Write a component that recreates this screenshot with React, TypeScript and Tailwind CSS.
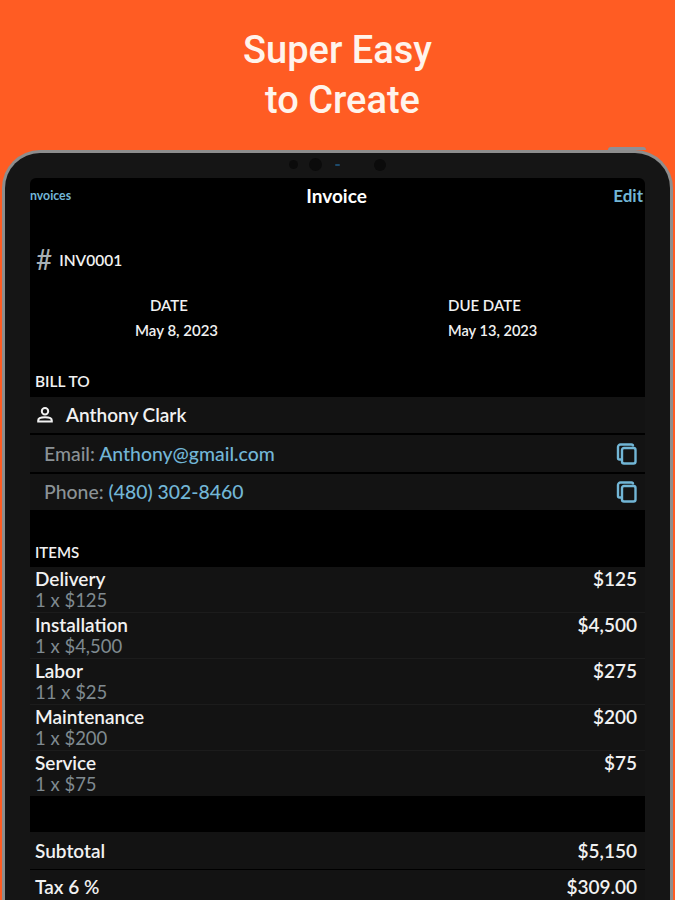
import React from "react";

const font = { fontFamily: '"Lato", "Noto Sans", sans-serif' };

function CopyIcon() {
  return (
    <svg width="22" height="22" viewBox="0 0 22 22" fill="none" stroke="#72b6d6" strokeWidth="2.4" className="-mr-[1px] shrink-0">
      <path d="M17 3.4 V3 a1.5 1.5 0 0 0 -1.5 -1.5 H4.5 A2.5 2.5 0 0 0 2 4 V15 a1.5 1.5 0 0 0 1.5 1.5 H5" />
      <rect x="6" y="5" width="13.5" height="15.5" rx="2" />
    </svg>
  );
}

function PersonIcon() {
  return (
    <svg width="18" height="18" viewBox="0 0 18 18" fill="none" stroke="#f1f1f1" strokeWidth="2" className="shrink-0">
      <circle cx="9" cy="5.2" r="3.2" />
      <path d="M2.2 15.6 v-1.2 c0 -2 3.2 -3.2 6.8 -3.2 s6.8 1.2 6.8 3.2 v1.2 z" />
    </svg>
  );
}

const items = [
  ["Delivery", "1 x $125", "$125"],
  ["Installation", "1 x $4,500", "$4,500"],
  ["Labor", "11 x $25", "$275"],
  ["Maintenance", "1 x $200", "$200"],
  ["Service", "1 x $75", "$75"],
];

export default function App() {
  return (
    <div className="h-[900px] w-[675px] overflow-hidden bg-[#ff5c23]" style={font}>
      <h1 className="pt-[25px] text-center text-[38px] leading-[50px] font-medium text-[#fff4ec]" style={{ fontFamily: 'Roboto, sans-serif' }}>
        <div>Super Easy</div>
        <div className="pl-[10px]">to Create</div>
      </h1>
      <div className="relative mx-[2px] mt-[25px] h-[760px] rounded-t-[38px] border-x-[3px] border-t-[3px] border-[#8d8d8d] bg-[#151515] px-[25px] pt-[25px]">
        <div className="absolute -top-[6px] right-[24px] h-[3px] w-[38px] rounded-t bg-[#8f8f96]" />
        <div className="absolute top-[5px] left-[284px] flex items-center">
          <div className="h-[9px] w-[9px] rounded-full bg-[#0b0b0b]" />
          <div className="ml-[11px] h-[13px] w-[13px] rounded-full bg-[#0b0b0b]" />
          <div className="ml-[13px] h-[2px] w-[5px] rounded-full bg-[#1d4a6b]" />
          <div className="ml-[34px] h-[12px] w-[12px] rounded-full bg-[#0b0b0b]" />
        </div>
        <div className="h-[740px] rounded-t-[6px] bg-black text-[#f1f1f1]">
          <div className="flex h-[36px] items-center justify-between">
            <span className="w-[80px] text-[12.3px] font-bold whitespace-nowrap text-[#72b6d6]">nvoices</span>
            <span className="pr-[2px] text-[19px] font-bold text-white">Invoice</span>
            <span className="w-[80px] pr-[2px] text-right text-[17px] font-bold text-[#72b6d6]">Edit</span>
          </div>
          <div className="flex h-[62px] items-end gap-[8px] pl-[6px]">
            <span className="text-[28px] leading-[34px] text-[#a9b0b5]">#</span>
            <span className="-ml-[1px] pb-[6px] text-[15.5px] leading-[20px] font-semibold">INV0001</span>
          </div>
          <div className="mt-[17px] flex h-[50px]">
            <div className="ml-[105px] w-[313px] text-[15px] leading-[25px] font-semibold">
              <div className="pl-[15px]">DATE</div>
              <div>May 8, 2023</div>
            </div>
            <div className="text-[15px] leading-[25px] font-semibold">
              <div>DUE DATE</div>
              <div className="text-[14.6px]">May 13, 2023</div>
            </div>
          </div>
          <div className="mt-[24px] h-[30px] pl-[5px] text-[15.5px] leading-[29px] font-semibold">BILL TO</div>
          <div className="flex flex-col gap-[2px]">
            <div className="flex h-[36px] items-center gap-[12px] bg-[#131313] pl-[6px] text-[19px] font-semibold">
              <PersonIcon />
              Anthony Clark
            </div>
            <div className="flex h-[37px] items-center justify-between bg-[#131313] pr-[8px] pl-[14px] text-[19.4px] font-medium text-[#8b9296]">
              <span>Email: <span className="text-[#72b6d6]">Anthony@gmail.com</span></span>
              <CopyIcon />
            </div>
            <div className="flex h-[36px] items-center justify-between bg-[#131313] pr-[8px] pl-[14px] text-[19.4px] font-medium text-[#8b9296]">
              <span>Phone: <span className="text-[#72b6d6]">(480) 302-8460</span></span>
              <CopyIcon />
            </div>
          </div>
          <div className="mt-[29px] h-[28px] pl-[5px] text-[15px] leading-[26px] font-semibold">ITEMS</div>
          <div className="flex flex-col">
            {items.map(([name, qty, price]) => (
              <div key={name} className="flex h-[46px] justify-between border-b border-[#1c1c1c] bg-[#131313] pr-[8px] pl-[5px] last:h-[45px] last:border-b-0">
                <div>
                  <div className="text-[19px] leading-[24px] font-semibold">{name}</div>
                  <div className="text-[18.5px] leading-[19px] text-[#7f8a90]">{qty}</div>
                </div>
                <div className="text-[19px] leading-[24px] font-semibold">{price}</div>
              </div>
            ))}
          </div>
          <div className="mt-[36px] flex flex-col gap-[1px]">
            <div className="flex h-[37px] items-center justify-between bg-[#131313] pt-[1px] pr-[8px] pl-[5px] text-[19px] font-semibold">
              <span>Subtotal</span>
              <span>$5,150</span>
            </div>
            <div className="flex h-[34px] items-center justify-between bg-[#131313] pr-[8px] pl-[5px] text-[19px] font-semibold">
              <span>Tax 6 %</span>
              <span>$309.00</span>
            </div>
          </div>
        </div>
      </div>
    </div>
  );
}
